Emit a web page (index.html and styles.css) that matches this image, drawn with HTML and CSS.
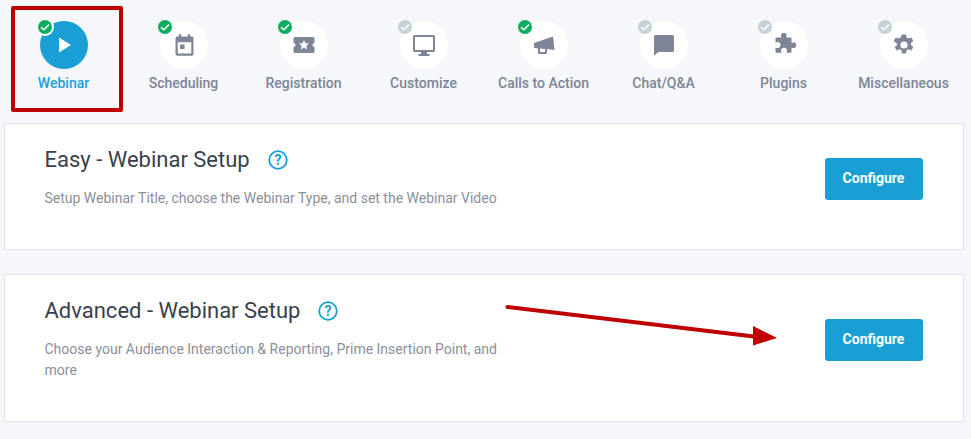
FILE: index.html
```html
<!DOCTYPE html>
<html lang="en">
<head>
<meta charset="utf-8">
<title>Webinar Setup</title>
<link rel="stylesheet" href="styles.css">
</head>
<body>
<div class="page">
  <nav class="steps">
    <div class="step active">
      <div class="circle">
        <span class="badge done"><svg viewBox="0 0 14 14"><path d="M3 7.2l2.8 2.6L11 4.6"/></svg></span>
        <svg class="icon" viewBox="0 0 24 24"><path d="M7 4.600v14.800L19 12z"/></svg>
      </div>
      <span class="label">Webinar</span>
    </div>
    <div class="step">
      <div class="circle">
        <span class="badge done"><svg viewBox="0 0 14 14"><path d="M3 7.2l2.8 2.6L11 4.6"/></svg></span>
        <svg class="icon icon-lg" viewBox="0 0 24 24"><path fill-rule="evenodd" d="M7 2h2v2h6V2h2v2h1.500A1.500 1.500 0 0 1 20 5.500v14a1.500 1.500 0 0 1-1.500 1.500h-13A1.500 1.500 0 0 1 4 19.500v-14A1.500 1.500 0 0 1 5.500 4H7zM6 9v10h12V9zm2 2h4v4H8z"/></svg>
      </div>
      <span class="label">Scheduling</span>
    </div>
    <div class="step">
      <div class="circle">
        <span class="badge done"><svg viewBox="0 0 14 14"><path d="M3 7.2l2.8 2.6L11 4.6"/></svg></span>
        <svg class="icon" viewBox="0 0 24 24"><path fill-rule="evenodd" d="M3 4h18a1.500 1.500 0 0 1 1.500 1.500V10a2 2 0 0 0 0 4v4.500A1.500 1.500 0 0 1 21 20H3a1.500 1.500 0 0 1-1.500-1.500V14a2 2 0 0 0 0-4V5.500A1.500 1.500 0 0 1 3 4zm9 3l-1.400 3.300-3.600.3 2.700 2.400-.8 3.500 3.100-1.900 3.100 1.900-.8-3.500 2.700-2.400-3.600-.3z"/></svg>
      </div>
      <span class="label">Registration</span>
    </div>
    <div class="step">
      <div class="circle">
        <span class="badge"><svg viewBox="0 0 14 14"><path d="M3 7.2l2.8 2.6L11 4.6"/></svg></span>
        <svg class="icon" viewBox="0 0 24 24"><path fill-rule="evenodd" d="M2.500 2h19A1.500 1.500 0 0 1 23 3.500v14a1.500 1.500 0 0 1-1.500 1.500H15v2h2.500v2h-11v-2H9v-2H2.500A1.500 1.500 0 0 1 1 17.500v-14A1.500 1.500 0 0 1 2.500 2zM3 4v13h18V4z"/></svg>
      </div>
      <span class="label">Customize</span>
    </div>
    <div class="step">
      <div class="circle">
        <span class="badge done"><svg viewBox="0 0 14 14"><path d="M3 7.2l2.8 2.6L11 4.6"/></svg></span>
        <svg class="icon" viewBox="0 0 24 24"><path fill-rule="evenodd" d="M2 10L21 3.500 22.500 17 15 16v3.800a1.200 1.200 0 0 1-1.200 1.200H7.200A1.200 1.200 0 0 1 6 19.800V15.400l-4-.6zM8 15.600V19h5v-3.100z"/></svg>
      </div>
      <span class="label">Calls to Action</span>
    </div>
    <div class="step">
      <div class="circle">
        <span class="badge"><svg viewBox="0 0 14 14"><path d="M3 7.2l2.8 2.6L11 4.6"/></svg></span>
        <svg class="icon" viewBox="0 0 24 24"><path d="M3.500 2h17A1.500 1.500 0 0 1 22 3.500v14a1.500 1.500 0 0 1-1.500 1.500H6.500L2 22.500V3.500A1.500 1.500 0 0 1 3.500 2z"/></svg>
      </div>
      <span class="label">Chat/Q&amp;A</span>
    </div>
    <div class="step">
      <div class="circle">
        <span class="badge"><svg viewBox="0 0 14 14"><path d="M3 7.2l2.800 2.600L11 4.600"/></svg></span>
        <svg class="icon" viewBox="0 0 24 24"><path d="M9 2.500a2.800 2.800 0 0 1 5.600 0c0 .9-.4 1.400-.6 2h4.500a1 1 0 0 1 1 1V10c.6-.3 1.100-.6 2-.6a2.800 2.800 0 0 1 0 5.600c-.9 0-1.400-.4-2-.6v4.400a1 1 0 0 1-1 1H14.400c.3-.7.600-1.200.6-2.100a3 3 0 0 0-6 0c0 .9.300 1.400.6 2.100H4.500a1 1 0 0 1-1-1v-4.300c.6.300 1.200.6 2 .6a3 3 0 0 0 0-6c-.8 0-1.400.3-2 .6V5.500a1 1 0 0 1 1-1H9.600C9.300 3.900 9 3.400 9 2.500z"/></svg>
      </div>
      <span class="label">Plugins</span>
    </div>
    <div class="step">
      <div class="circle">
        <span class="badge"><svg viewBox="0 0 14 14"><path d="M3 7.2l2.800 2.600L11 4.600"/></svg></span>
        <svg class="icon" viewBox="0 0 24 24"><path fill-rule="evenodd" d="M10 1.500h4l.5 3 1.900 1.100 2.900-1.100 2 3.400-2.400 2 .1 2.200 2.300 1.900-2 3.400-2.900-1.100-1.900 1.100-.5 3h-4l-.5-3-1.900-1.100-2.900 1.100-2-3.400 2.400-1.900V10.800L1.700 7.900l2-3.400 2.900 1.100 1.900-1.100zM12 8.400a3.600 3.600 0 1 0 0 7.200 3.600 3.600 0 0 0 0-7.200z"/></svg>
      </div>
      <span class="label">Miscellaneous</span>
    </div>
  </nav>

  <section class="card card-easy">
    <div class="card-text">
      <h2 class="card-title">Easy - Webinar Setup
        <svg class="help" viewBox="0 0 20 20"><circle cx="10" cy="10" r="8.800"/><text x="10" y="15" text-anchor="middle">?</text></svg>
      </h2>
      <p class="card-desc">Setup Webinar Title, choose the Webinar Type, and set the Webinar Video</p>
    </div>
    <button class="configure">Configure</button>
  </section>

  <section class="card card-advanced">
    <div class="card-text">
      <h2 class="card-title">Advanced - Webinar Setup
        <svg class="help" viewBox="0 0 20 20"><circle cx="10" cy="10" r="8.800"/><text x="10" y="15" text-anchor="middle">?</text></svg>
      </h2>
      <p class="card-desc">Choose your Audience Interaction &amp; Reporting, Prime Insertion Point, and more</p>
    </div>
    <button class="configure">Configure</button>
  </section>

  <div class="highlight"></div>
  <svg class="arrow" viewBox="0 0 971 439"><line x1="507.500" y1="307" x2="758" y2="337" /><polygon points="753,326 777,338 753,345.500"/></svg>
</div>
</body>
</html>
```

FILE: styles.css
```css
* { box-sizing: border-box; }
html, body { margin: 0; padding: 0; }
body {
  background: #f5f7fb;
  font-family: Roboto, "Liberation Sans", sans-serif;
  overflow: hidden;
}
.page {
  position: relative;
  width: 971px;
  height: 439px;
  padding: 21px 7px 0 4px;
}
.steps {
  display: flex;
  height: 102px;
}
.step {
  width: 120px;
  display: flex;
  flex-direction: column;
  align-items: center;
}
.circle {
  position: relative;
  width: 48px;
  height: 48px;
  border-radius: 50%;
  background: #fff;
  display: flex;
  align-items: center;
  justify-content: center;
}
.icon {
  width: 24px;
  height: 24px;
  fill: #7e8596;
}
.icon-lg {
  width: 27px;
  height: 27px;
}
.step .badge {
  position: absolute;
  left: -2px;
  top: -1px;
  width: 14px;
  height: 14px;
  border-radius: 50%;
  background: #c5d0d8;
  display: flex;
}
.step .badge.done { background: #0bae5c; }
.badge svg {
  width: 14px;
  height: 14px;
  fill: none;
  stroke: #fff;
  stroke-width: 1.500;
}
.label {
  margin-top: 5px;
  margin-right: 1px;
  font-size: 14px;
  line-height: 18px;
  font-weight: 500;
  color: #7e8596;
  white-space: nowrap;
}
.active .circle { background: #1a9fd4; }
.active .icon { fill: #fff; }
.active .label { color: #1a9fd4; }
.active .badge { box-shadow: 0 0 0 2px #fff; }
.card {
  background: #fff;
  border: 1px solid #e2e4ea;
  display: flex;
  justify-content: space-between;
  align-items: flex-start;
  padding: 0 40px 0 39.500px;
}
.card-easy { height: 127px; padding-top: 22px; }
.card-advanced { height: 148px; margin-top: 24px; padding-top: 22px; }
.card-text { width: 460px; }
.card-title {
  margin: 0;
  display: flex;
  align-items: center;
  gap: 18px;
  font-size: 22px;
  line-height: 28px;
  font-weight: 400;
  color: #3a3f4d;
  white-space: nowrap;
}
.help { width: 20px; height: 20px; margin-top: -1px; }
.help circle { fill: none; stroke: #1a9fd4; stroke-width: 1.800; }
.help text { fill: #1a9fd4; font-size: 14px; font-weight: 700; font-family: Roboto, sans-serif; }
.card-desc {
  margin: 14px 0 0;
  font-size: 14px;
  line-height: 21px;
  color: #8a8f9e;
}
.configure {
  width: 98px;
  height: 42px;
  border: 0;
  border-radius: 3px;
  background: #1a9fd4;
  color: #fff;
  font-family: Roboto, sans-serif;
  font-size: 14px;
  font-weight: 700;
  padding: 0 1px 2px 0;
}
.card-easy .configure { margin-top: 12px; }
.card-advanced .configure { margin-top: 22px; }
.highlight {
  position: absolute;
  left: 11px;
  top: 6px;
  width: 112px;
  height: 106px;
  border: 4px solid #bf0000;
  border-radius: 2px;
}
.arrow {
  position: absolute;
  left: 0;
  top: 0;
  width: 971px;
  height: 439px;
}
.arrow line { stroke: #bf0000; stroke-width: 4; stroke-linecap: round; }
.arrow polygon { fill: #bf0000; }
```
